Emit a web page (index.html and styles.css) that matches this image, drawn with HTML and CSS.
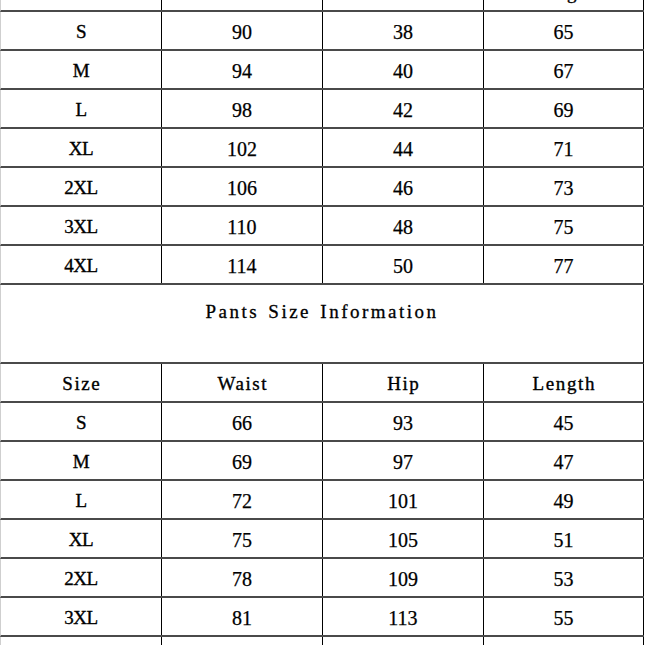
FILE: index.html
```html
<!DOCTYPE html>
<html lang="en">
<head>
<meta charset="utf-8">
<title>Size Information</title>
<link rel="stylesheet" href="styles.css">
</head>
<body>
<div class="sheet">
  <div class="row">
    <div class="cell head">Size</div>
    <div class="cell head">Bust</div>
    <div class="cell head">Shoulder</div>
    <div class="cell head">Length</div>
  </div>
  <div class="row"><div class="cell label">S</div><div class="cell num">90</div><div class="cell num">38</div><div class="cell num">65</div></div>
  <div class="row"><div class="cell label">M</div><div class="cell num">94</div><div class="cell num">40</div><div class="cell num">67</div></div>
  <div class="row"><div class="cell label">L</div><div class="cell num">98</div><div class="cell num">42</div><div class="cell num">69</div></div>
  <div class="row"><div class="cell label">XL</div><div class="cell num">102</div><div class="cell num">44</div><div class="cell num">71</div></div>
  <div class="row"><div class="cell label">2XL</div><div class="cell num">106</div><div class="cell num">46</div><div class="cell num">73</div></div>
  <div class="row"><div class="cell label">3XL</div><div class="cell num">110</div><div class="cell num">48</div><div class="cell num">75</div></div>
  <div class="row"><div class="cell label">4XL</div><div class="cell num">114</div><div class="cell num">50</div><div class="cell num">77</div></div>

  <div class="title-row"><div class="title">Pants Size Information</div></div>

  <div class="row">
    <div class="cell head">Size</div>
    <div class="cell head">Waist</div>
    <div class="cell head">Hip</div>
    <div class="cell head">Length</div>
  </div>
  <div class="row"><div class="cell label">S</div><div class="cell num">66</div><div class="cell num">93</div><div class="cell num">45</div></div>
  <div class="row"><div class="cell label">M</div><div class="cell num">69</div><div class="cell num">97</div><div class="cell num">47</div></div>
  <div class="row"><div class="cell label">L</div><div class="cell num">72</div><div class="cell num">101</div><div class="cell num">49</div></div>
  <div class="row"><div class="cell label">XL</div><div class="cell num">75</div><div class="cell num">105</div><div class="cell num">51</div></div>
  <div class="row"><div class="cell label">2XL</div><div class="cell num">78</div><div class="cell num">109</div><div class="cell num">53</div></div>
  <div class="row"><div class="cell label">3XL</div><div class="cell num">81</div><div class="cell num">113</div><div class="cell num">55</div></div>
  <div class="row"><div class="cell label">4XL</div><div class="cell num">84</div><div class="cell num">117</div><div class="cell num">57</div></div>
</div>
</body>
</html>
```

FILE: styles.css
```css
html, body {
  margin: 0;
  padding: 0;
  background: #ffffff;
  color: #000000;
  overflow: hidden;
}

.sheet {
  margin-top: -27px;
  width: 644px;
}

.row {
  display: grid;
  grid-template-columns: 161px 161px 161px 160px;
  border-left: 1px solid #cfcfcf;
  border-bottom: 2px solid #4a4a4a;
}

.cell {
  box-sizing: border-box;
  height: 37px;
  padding-top: 3px;
  border-right: 1px solid #000000;
  display: flex;
  align-items: center;
  justify-content: center;
  white-space: nowrap;
  font-family: "Liberation Serif", "DejaVu Serif", serif;
}

.head {
  font-size: 19px;
  letter-spacing: 1.6px;
  padding-left: 1.6px;
  -webkit-text-stroke: 0.35px #000;
}

.label {
  font-size: 19px;
  letter-spacing: -0.5px;
  -webkit-text-stroke: 0.35px #000;
}

.num {
  font-size: 20px;
  -webkit-text-stroke: 0.25px #000;
}

.title-row {
  box-sizing: border-box;
  height: 79px;
  border-left: 1px solid #cfcfcf;
  border-right: 1px solid #000000;
  border-bottom: 2px solid #4a4a4a;
  padding-top: 8px;
}

.title {
  height: 37px;
  display: flex;
  align-items: center;
  justify-content: center;
  font-family: "Liberation Serif", "DejaVu Serif", serif;
  font-size: 19px;
  letter-spacing: 2.5px;
  word-spacing: 2px;
  white-space: pre;
  -webkit-text-stroke: 0.3px #000;
}
```
